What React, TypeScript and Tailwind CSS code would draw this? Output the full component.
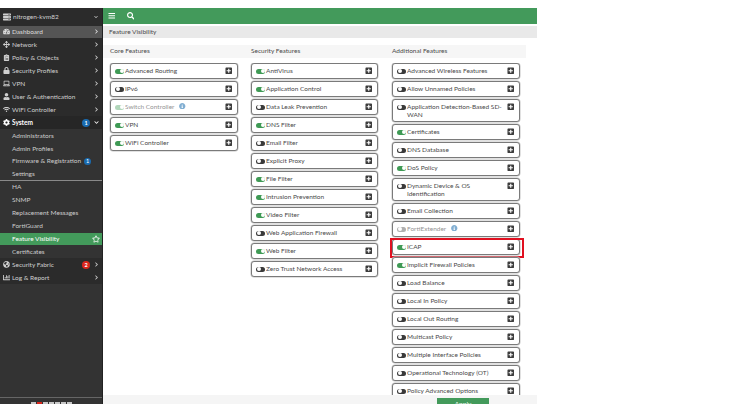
import React from "react";
import { FaTachometerAlt, FaArrowsAlt, FaClipboardList, FaLock, FaLaptop, FaUser, FaWifi, FaCog, FaChartBar, FaBars, FaSearch, FaPlusSquare, FaInfoCircle, FaChevronRight, FaChevronDown, FaRegStar, FaGlobeAmericas, FaServer } from "react-icons/fa";

type Nav = { label: string; icon?: React.ReactNode; chevron?: boolean; badge?: string; badgeColor?: string; bold?: boolean; active?: boolean; current?: boolean; down?: boolean };

const top: Nav[] = [
  { label: "Dashboard", icon: <FaTachometerAlt />, chevron: true, active: true },
  { label: "Network", icon: <FaArrowsAlt />, chevron: true },
  { label: "Policy & Objects", icon: <FaClipboardList />, chevron: true },
  { label: "Security Profiles", icon: <FaLock />, chevron: true },
  { label: "VPN", icon: <FaLaptop />, chevron: true },
  { label: "User & Authentication", icon: <FaUser />, chevron: true },
  { label: "WiFi Controller", icon: <FaWifi />, chevron: true },
  { label: "System", icon: <FaCog />, badge: "1", badgeColor: "bg-[#1a6bb0]", bold: true, down: true },
];
const sub1: Nav[] = [
  { label: "Administrators" },
  { label: "Admin Profiles" },
  { label: "Firmware & Registration", badge: "1", badgeColor: "bg-[#1a6bb0]" },
  { label: "Settings" },
];
const sub2: Nav[] = [
  { label: "HA" },
  { label: "SNMP" },
  { label: "Replacement Messages" },
  { label: "FortiGuard" },
  { label: "Feature Visibility", current: true },
  { label: "Certificates" },
];
const bottom: Nav[] = [
  { label: "Security Fabric", icon: <FaGlobeAmericas />, chevron: true, badge: "2", badgeColor: "bg-[#d9261c]" },
  { label: "Log & Report", icon: <FaChartBar />, chevron: true },
];

function Row({ n }: { n: Nav }) {
  const bg = n.current ? "bg-[#439a5b] text-white" : n.active ? "bg-[#555555] text-[#dddddd]" : n.bold ? "bg-[#262626] text-white" : n.icon ? "bg-[#2b2b2b] text-[#cfcfcf]" : "text-[#cccccc]";
  return (
    <div className={`flex h-[12.95px] items-center shrink-0 ${bg} ${n.bold ? "font-bold" : ""}`}>
      <span className="w-[12px] shrink-0 flex justify-center text-[7px]">{n.icon}</span>
      <span className="whitespace-nowrap">{n.label}</span>
      {n.badge && !n.chevron && !n.down ? (
        <span className={`ml-[3px] w-[7px] h-[7px] rounded-full ${n.badgeColor} text-white text-[5.5px] leading-[7px] text-center`}>{n.badge}</span>
      ) : null}
      <span className="ml-auto flex items-center">
        {n.badge && (n.chevron || n.down) ? (
          <span className={`mr-[4px] w-[8px] h-[8px] rounded-full ${n.badgeColor} text-white text-[5.5px] leading-[8px] text-center font-bold`}>{n.badge}</span>
        ) : null}
        {n.chevron ? <FaChevronRight className="text-[5px] mr-[3px]" /> : null}
        {n.down ? <FaChevronDown className="text-[5px] mr-[3px]" /> : null}
        {n.current ? <FaRegStar className="text-[8px] mr-[2px]" /> : null}
      </span>
    </div>
  );
}

type F = { label: string; on?: boolean; dim?: boolean; info?: boolean; red?: boolean };

function Toggle({ on, dim }: { on?: boolean; dim?: boolean }) {
  return (
    <span className={`relative inline-block w-[9px] h-[5px] shrink-0 rounded-full ${on ? "bg-[#3f9a55]" : "bg-[#3a3a3a]"} ${dim ? "opacity-40" : ""}`}>
      <span className={`absolute top-[0.5px] w-[4px] h-[4px] rounded-full bg-white ${on ? "right-[0.5px]" : "left-[0.5px]"}`} />
    </span>
  );
}

function Card({ f }: { f: F }) {
  const lines = f.label.split("\n");
  return (
    <div className={`relative flex items-start border border-[#7a7a7a] rounded-[3px] shadow-[0_0_0_0.5px_#c4c4c4] bg-white pl-[4px] pr-[5px] ${lines.length > 1 ? "h-[23px]" : "h-[16px]"}`}>
      <span className="h-[15px] flex items-center mr-[1px]"><Toggle on={f.on} dim={f.dim} /></span>
      <div className={`flex-1 leading-[8.5px] pt-[3px] text-[#4a4a4a] ${f.dim ? "opacity-60" : ""}`}>
        {lines.map((l) => (
          <div key={l} className="whitespace-nowrap">{l}{f.info ? <FaInfoCircle className="inline ml-[5px] text-[#2f7ab5] text-[6.5px] align-[-0.5px]" /> : null}</div>
        ))}
      </div>
      <span className="h-[14px] flex items-center"><FaPlusSquare className="text-[#3d3d3d] text-[7.5px]" /></span>
      {f.red ? <div className="absolute -left-[3px] -right-[5px] -top-[2px] -bottom-[4px] border-2 border-[#e01020]" /> : null}
    </div>
  );
}

const core: F[] = [
  { label: "Advanced Routing", on: true },
  { label: "IPv6" },
  { label: "Switch Controller", on: true, dim: true, info: true },
  { label: "VPN", on: true },
  { label: "WiFi Controller", on: true },
];
const security: F[] = [
  { label: "AntiVirus", on: true },
  { label: "Application Control", on: true },
  { label: "Data Leak Prevention" },
  { label: "DNS Filter", on: true },
  { label: "Email Filter" },
  { label: "Explicit Proxy" },
  { label: "File Filter", on: true },
  { label: "Intrusion Prevention", on: true },
  { label: "Video Filter", on: true },
  { label: "Web Application Firewall" },
  { label: "Web Filter", on: true },
  { label: "Zero Trust Network Access" },
];
const extra: F[] = [
  { label: "Advanced Wireless Features" },
  { label: "Allow Unnamed Policies" },
  { label: "Application Detection-Based SD-\nWAN" },
  { label: "Certificates", on: true },
  { label: "DNS Database" },
  { label: "DoS Policy", on: true },
  { label: "Dynamic Device & OS\nIdentification" },
  { label: "Email Collection" },
  { label: "FortiExtender", dim: true, info: true },
  { label: "ICAP", on: true, red: true },
  { label: "Implicit Firewall Policies", on: true },
  { label: "Load Balance" },
  { label: "Local In Policy" },
  { label: "Local Out Routing" },
  { label: "Multicast Policy" },
  { label: "Multiple Interface Policies" },
  { label: "Operational Technology (OT)" },
  { label: "Policy Advanced Options" },
];

function Column({ items, cls }: { items: F[]; cls: string }) {
  return (
    <div className={`flex flex-col gap-[2px] ${cls}`}>
      {items.map((f) => <Card key={f.label} f={f} />)}
    </div>
  );
}

export default function App() {
  return (
    <div className="w-[730px] h-[404px] overflow-hidden bg-white pt-[8px] text-[6.5px]" style={{ fontFamily: "Lato, sans-serif" }}>
      <div className="flex w-[537px] h-[396px]">
        <aside className="w-[103px] shrink-0 bg-[#333333] border-r border-[#222222] flex flex-col overflow-hidden">
          <div className="h-[17.5px] shrink-0 bg-[#2b2b2b] flex items-center text-[#cfcfcf] pl-[3px]">
            <FaServer className="text-[8px] mr-[2px]" />
            <span>nitrogen-kvm82</span>
            <FaChevronDown className="ml-auto mr-[4px] text-[4px]" />
          </div>
          {top.map((n) => <Row key={n.label} n={n} />)}
          <div className="relative">
            {sub1.map((n) => <Row key={n.label} n={n} />)}
            <div className="absolute left-0 right-0 bottom-[-0.5px] border-t border-[#8a8a8a]" />
          </div>
          {sub2.map((n) => <Row key={n.label} n={n} />)}
          {bottom.map((n) => <Row key={n.label} n={n} />)}
          <div className="mt-auto h-[7px] shrink-0 border-t border-[#666666] flex justify-center items-end gap-[1px]">
            <span className="w-[5px] h-[2px] bg-[#c8c8c8]" />
            <span className="w-[5px] h-[2px] bg-[#d9261c]" />
            <span className="w-[5px] h-[2px] bg-[#c8c8c8]" />
            <span className="w-[5px] h-[2px] bg-[#c8c8c8]" />
            <span className="w-[5px] h-[2px] bg-[#c8c8c8]" />
            <span className="w-[5px] h-[2px] bg-[#c8c8c8]" />
            <span className="w-[5px] h-[2px] bg-[#c8c8c8]" />
          </div>
        </aside>
        <main className="flex-1 flex flex-col min-w-0 overflow-hidden">
          <div className="h-[16px] shrink-0 bg-[#439a5b] flex items-center text-white pl-[5px] gap-[11px] text-[7.5px]">
            <FaBars /><FaSearch />
          </div>
          <div className="h-[12.5px] mt-[1.5px] shrink-0 bg-[#e9e9e9] flex items-center pl-[6px] text-[#4a4a4a]">Feature Visibility</div>
          <div className="mt-[6.5px] h-[13px] shrink-0 bg-[#f6f6f6] w-[423px] flex items-center text-[#4a4a4a]">
            <span className="ml-[7px] w-[141px]">Core Features</span>
            <span className="w-[141px]">Security Features</span>
            <span>Additional Features</span>
          </div>
          <div className="flex items-start mt-[5px] flex-1 overflow-hidden">
            <Column items={core} cls="ml-[7px] w-[128px]" />
            <Column items={security} cls="ml-[13px] w-[127px]" />
            <Column items={extra} cls="ml-[14px] w-[128px]" />
          </div>
          <div className="h-[9px] shrink-0 bg-[#f5f5f5] pt-[3px] pl-[334px]">
            <div className="w-[52px] h-[12px] bg-[#439a5b] text-white text-center leading-[12px]">Apply</div>
          </div>
        </main>
      </div>
    </div>
  );
}
